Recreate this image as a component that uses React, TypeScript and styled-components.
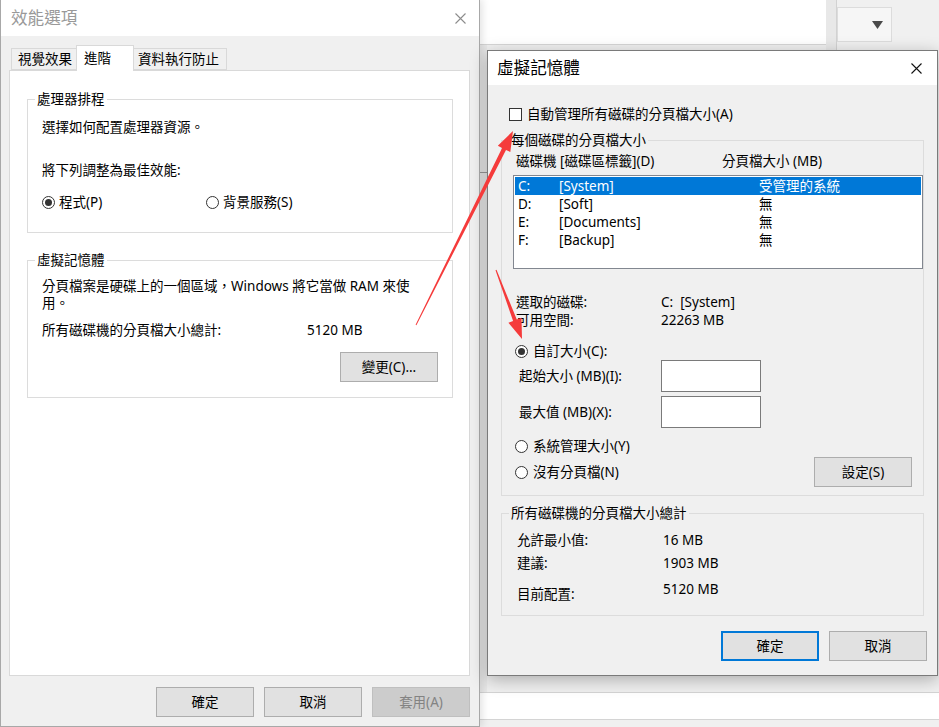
import React from "react";
import styled, { createGlobalStyle } from "styled-components";

const FONT = `"Noto Sans", "Noto Sans CJK TC", sans-serif`;

const GlobalStyle = createGlobalStyle`
  html, body { margin: 0; padding: 0; background: #f0f0f0; }
  body { font-family: ${FONT}; }
  *, *::before, *::after { box-sizing: border-box; }
`;

const Desktop = styled.div`
  position: relative;
  width: 939px;
  height: 727px;
  overflow: hidden;
  background: #f0f0f0;
  font-family: ${FONT};
  font-size: 13.5px;
  line-height: 18px;
  color: #000;
`;

/* ---------- background windows ---------- */
const BackPane = styled.div`
  position: absolute;
  left: 479px;
  top: 0;
  width: 347px;
  height: 45px;
  background: #fff;
  border-bottom: 1px solid #d6d6d6;
`;
const BackSplitter = styled.div`
  position: absolute;
  left: 826px;
  top: 0;
  width: 11px;
  height: 60px;
  background: #e8e8e8;
  border-right: 1px solid #d2d2d2;
`;
const BackSelect = styled.div`
  position: absolute;
  left: 837px;
  top: 7px;
  width: 55px;
  height: 35px;
  border: 1px solid #dcdcdc;
  background: #f6f6f6;
  display: flex;
  align-items: center;
  justify-content: flex-end;
  padding-right: 8px;
`;
const BackGutter = styled.div`
  position: absolute;
  left: 479px;
  top: 45px;
  width: 8px;
  height: 647px;
  background: #eaeaea;
  border-top: 127px solid #eaeaea;
  &::after {
    content: "";
    position: absolute;
    left: 0;
    top: 0;
    width: 8px;
    height: 1px;
    background: #9a9a9a;
  }
`;
const BackStrip = styled.div`
  position: absolute;
  left: 479px;
  top: 692px;
  width: 460px;
  height: 28px;
  background: #fff;
  border-top: 1px solid #d4d4d4;
  border-bottom: 1px solid #d4d4d4;
`;

/* ---------- window chrome ---------- */
const Window = styled.div<{ $active?: boolean }>`
  position: absolute;
  display: flex;
  flex-direction: column;
  background: #f0f0f0;
  border: 1px solid ${(p) => (p.$active ? "#7a7a7a" : "#a8a8a8")};
  box-shadow: ${(p) =>
    p.$active ? "0 4px 16px rgba(0,0,0,0.28)" : "2px 0 8px rgba(0,0,0,0.12)"};
`;
const PerfWindow = styled(Window)`
  left: 0;
  top: -1px;
  width: 480px;
  height: 728px;
`;
const VmWindow = styled(Window)`
  left: 487px;
  top: 50px;
  width: 451px;
  z-index: 2;
`;
const TitleBar = styled.div<{ $h: number; $pr: number; $pl: number }>`
  height: ${(p) => p.$h}px;
  flex: none;
  background: #fff;
  display: flex;
  align-items: center;
  justify-content: space-between;
  padding: 0 ${(p) => p.$pr}px 0 ${(p) => p.$pl}px;
`;
const TitleText = styled.span<{ $inactive?: boolean }>`
  font-size: 16.6px;
  line-height: 22px;
  color: ${(p) => (p.$inactive ? "#999" : "#000")};
`;

const CloseIcon = ({ color }: { color: string }) => (
  <svg width="11" height="11" viewBox="0 0 11 11">
    <path d="M0.5 0.5 L10.5 10.5 M10.5 0.5 L0.5 10.5" stroke={color} strokeWidth="1.1" fill="none" />
  </svg>
);

const CaretDown = () => (
  <svg width="11" height="8" viewBox="0 0 11 8">
    <polygon points="0,0 11,0 5.5,8" fill="#4a4a4a" />
  </svg>
);

/* ---------- shared controls ---------- */
const Btn = styled.button<{ $default?: boolean }>`
  width: 98px;
  height: 30px;
  flex: none;
  padding: 0;
  font: inherit;
  color: #000;
  background: #e1e1e1;
  border: ${(p) => (p.$default ? "2px solid #0078d7" : "1px solid #adadad")};
  &:disabled {
    background: #cccccc;
    border-color: #bfbfbf;
    color: #838383;
  }
`;
const ButtonRow = styled.div<{ $mt: number; $mr?: number }>`
  display: flex;
  justify-content: flex-end;
  gap: 10px;
  margin-top: ${(p) => p.$mt}px;
  margin-right: ${(p) => p.$mr ?? 0}px;
`;

const Group = styled.fieldset<{ $mt?: number }>`
  margin: ${(p) => p.$mt ?? 0}px 0 0 0;
  padding: 0;
  min-width: 0;
  border: 1px solid #dcdcdc;
`;
const Legend = styled.legend`
  margin-left: 7px;
  padding: 0 2px;
  line-height: 18px;
`;
const GroupBody = styled.div<{ $pad: string }>`
  display: flex;
  flex-direction: column;
  padding: ${(p) => p.$pad};
`;

const Radio = styled.span<{ $checked?: boolean }>`
  position: relative;
  flex: none;
  width: 13px;
  height: 13px;
  border-radius: 50%;
  border: 1px solid #333;
  background: #fff;
  &::after {
    content: "";
    position: absolute;
    inset: 2px;
    border-radius: 50%;
    background: ${(p) => (p.$checked ? "#333" : "transparent")};
  }
`;
const CheckBox = styled.span`
  flex: none;
  width: 13px;
  height: 13px;
  border: 1px solid #333;
  background: #fff;
`;
const Choice = styled.label<{ $gap: number; $pl?: number; $mt?: number }>`
  display: flex;
  align-items: center;
  gap: ${(p) => p.$gap}px;
  height: 18px;
  padding-left: ${(p) => p.$pl ?? 0}px;
  margin-top: ${(p) => p.$mt ?? 0}px;
  white-space: nowrap;
`;

const Line = styled.div<{ $mt?: number }>`
  margin-top: ${(p) => p.$mt ?? 0}px;
  white-space: pre;
`;

/* ---------- perf options dialog ---------- */
const PerfBody = styled.div`
  flex: 1;
  display: flex;
  flex-direction: column;
  padding: 9px 9px 9px 8px;
`;
const TabStrip = styled.div`
  position: relative;
  z-index: 1;
  display: flex;
  align-items: flex-start;
  height: 25px;
  margin-left: 2px;
`;
const Tab = styled.div<{ $w: number; $pl: number; $active?: boolean }>`
  width: ${(p) => p.$w}px;
  height: ${(p) => (p.$active ? 26 : 22)}px;
  margin-top: ${(p) => (p.$active ? 0 : 3)}px;
  margin-left: -1px;
  padding-left: ${(p) => p.$pl}px;
  padding-bottom: ${(p) => (p.$active ? 2 : 0)}px;
  display: flex;
  align-items: center;
  white-space: nowrap;
  background: ${(p) => (p.$active ? "#fff" : "#f0f0f0")};
  border: 1px solid #d9d9d9;
  border-bottom: ${(p) => (p.$active ? "none" : "1px solid #d9d9d9")};
  &:first-child {
    margin-left: 0;
  }
`;
const TabPanel = styled.div`
  flex: 1;
  display: flex;
  flex-direction: column;
  background: #fff;
  border: 1px solid #d9d9d9;
  padding: 19px 16px 0 17px;
`;
const TwoCol = styled.div<{ $col: number; $mt?: number; $pl?: number }>`
  display: grid;
  grid-template-columns: ${(p) => p.$col}px auto;
  align-items: center;
  margin-top: ${(p) => p.$mt ?? 0}px;
  padding-left: ${(p) => p.$pl ?? 0}px;
  white-space: pre;
`;
const Para = styled.p`
  margin: 0;
  line-height: 17px;
`;

/* ---------- virtual memory dialog ---------- */
const VmBody = styled.div`
  display: flex;
  flex-direction: column;
  padding: 20px 13px 14px 13px;
`;
const ListHeader = styled.div`
  display: grid;
  grid-template-columns: 206px auto;
  padding-left: 3px;
  white-space: nowrap;
`;
const ListBox = styled.div`
  height: 94px;
  margin-top: 5px;
  padding: 1px;
  background: #fff;
  border: 1px solid #828790;
`;
const ListRow = styled.div<{ $selected?: boolean }>`
  display: grid;
  grid-template-columns: 41px 200px 1fr;
  height: 18px;
  padding-left: 3px;
  white-space: nowrap;
  background: ${(p) => (p.$selected ? "#0078d7" : "transparent")};
  color: ${(p) => (p.$selected ? "#fff" : "#000")};
`;
const FieldRow = styled.div<{ $mt?: number }>`
  display: grid;
  grid-template-columns: 142px 100px;
  align-items: center;
  padding-left: 6px;
  margin-top: ${(p) => p.$mt ?? 0}px;
  white-space: nowrap;
`;
const TextBox = styled.input`
  width: 100px;
  height: 32px;
  border: 1px solid #7a7a7a;
  background: #fff;
  font: inherit;
  padding: 0 3px;
`;
const SplitRow = styled.div<{ $mt?: number }>`
  display: flex;
  align-items: center;
  justify-content: space-between;
  margin-top: ${(p) => p.$mt ?? 0}px;
  padding-right: 11px;
`;
const TotalRow = styled.div<{ $mt?: number; $labelDrop?: number }>`
  display: grid;
  grid-template-columns: 146px auto;
  align-items: start;
  margin-top: ${(p) => p.$mt ?? 0}px;
  white-space: nowrap;
  & > span:first-child {
    padding-top: ${(p) => p.$labelDrop ?? 0}px;
  }
`;

const ArrowLayer = styled.svg`
  position: absolute;
  left: 0;
  top: 0;
  z-index: 10;
  pointer-events: none;
`;

const drives = [
  { d: "C:", label: "[System]", size: "受管理的系統", selected: true },
  { d: "D:", label: "[Soft]", size: "無" },
  { d: "E:", label: "[Documents]", size: "無" },
  { d: "F:", label: "[Backup]", size: "無" },
];

export default function App() {
  return (
    <>
      <GlobalStyle />
      <Desktop>
        <BackPane />
        <BackSplitter />
        <BackSelect>
          <CaretDown />
        </BackSelect>
        <BackGutter />
        <BackStrip />

        <PerfWindow>
          <TitleBar $h={36} $pl={10} $pr={13}>
            <TitleText $inactive>效能選項</TitleText>
            <CloseIcon color="#8c8c8c" />
          </TitleBar>
          <PerfBody>
            <TabStrip>
              <Tab $w={66} $pl={6}>視覺效果</Tab>
              <Tab $w={58} $pl={7} $active>進階</Tab>
              <Tab $w={94} $pl={4}>資料執行防止</Tab>
            </TabStrip>
            <TabPanel>
              <Group>
                <Legend>處理器排程</Legend>
                <GroupBody $pad="10px 14px 21px 14px">
                  <Line>選擇如何配置處理器資源。</Line>
                  <Line $mt={25}>將下列調整為最佳效能:</Line>
                  <TwoCol $col={164} $mt={14}>
                    <Choice $gap={4}>
                      <Radio $checked />
                      程式(P)
                    </Choice>
                    <Choice $gap={4}>
                      <Radio />
                      背景服務(S)
                    </Choice>
                  </TwoCol>
                </GroupBody>
              </Group>
              <Group $mt={18}>
                <Legend>虛擬記憶體</Legend>
                <GroupBody $pad="9px 14px 15px 14px">
                  <Para>
                    分頁檔案是硬碟上的一個區域，Windows 將它當做 RAM 來使
                    <br />
                    用。
                  </Para>
                  <TwoCol $col={265} $mt={9}>
                    <span>所有磁碟機的分頁檔大小總計:</span>
                    <span>5120 MB</span>
                  </TwoCol>
                  <ButtonRow $mt={13}>
                    <Btn>變更(C)...</Btn>
                  </ButtonRow>
                </GroupBody>
              </Group>
            </TabPanel>
            <ButtonRow $mt={11}>
              <Btn>確定</Btn>
              <Btn>取消</Btn>
              <Btn disabled>套用(A)</Btn>
            </ButtonRow>
          </PerfBody>
        </PerfWindow>

        <VmWindow $active>
          <TitleBar $h={34} $pl={9} $pr={15}>
            <TitleText>虛擬記憶體</TitleText>
            <CloseIcon color="#111" />
          </TitleBar>
          <VmBody>
            <Choice $gap={5} $pl={8}>
              <CheckBox />
              自動管理所有磁碟的分頁檔大小(A)
            </Choice>
            <Group $mt={8}>
              <Legend>每個磁碟的分頁檔大小</Legend>
              <GroupBody $pad="3px 0 8px 11px">
                <ListHeader>
                  <span>磁碟機 [磁碟區標籤](D)</span>
                  <span>分頁檔大小 (MB)</span>
                </ListHeader>
                <ListBox>
                  {drives.map((r) => (
                    <ListRow key={r.d} $selected={r.selected}>
                      <span>{r.d}</span>
                      <span>{r.label}</span>
                      <span>{r.size}</span>
                    </ListRow>
                  ))}
                </ListBox>
                <TwoCol $col={145} $pl={3} $mt={24}>
                  <span>選取的磁碟:</span>
                  <span>C:  [System]</span>
                </TwoCol>
                <TwoCol $col={145} $pl={3}>
                  <span>可用空間:</span>
                  <span>22263 MB</span>
                </TwoCol>
                <Choice $gap={5} $pl={2} $mt={13}>
                  <Radio $checked />
                  自訂大小(C):
                </Choice>
                <FieldRow>
                  <span>起始大小 (MB)(I):</span>
                  <TextBox />
                </FieldRow>
                <FieldRow $mt={4}>
                  <span>最大值 (MB)(X):</span>
                  <TextBox />
                </FieldRow>
                <Choice $gap={5} $pl={2} $mt={9}>
                  <Radio />
                  系統管理大小(Y)
                </Choice>
                <SplitRow $mt={2}>
                  <Choice $gap={5} $pl={2}>
                    <Radio />
                    沒有分頁檔(N)
                  </Choice>
                  <Btn>設定(S)</Btn>
                </SplitRow>
              </GroupBody>
            </Group>
            <Group $mt={8}>
              <Legend>所有磁碟機的分頁檔大小總計</Legend>
              <GroupBody $pad="9px 0 12px 15px">
                <TotalRow>
                  <span>允許最小值:</span>
                  <span>16 MB</span>
                </TotalRow>
                <TotalRow $mt={5}>
                  <span>建議:</span>
                  <span>1903 MB</span>
                </TotalRow>
                <TotalRow $mt={8} $labelDrop={5}>
                  <span>目前配置:</span>
                  <span>5120 MB</span>
                </TotalRow>
              </GroupBody>
            </Group>
            <ButtonRow $mt={15} $mr={-3}>
              <Btn $default>確定</Btn>
              <Btn>取消</Btn>
            </ButtonRow>
          </VmBody>
        </VmWindow>

        <ArrowLayer width="939" height="727" viewBox="0 0 939 727">
          <polygon
            points="416.4,325.2 506.0,149.9 510.3,152.0 513,131 497.8,145.7 502.1,147.9 415.6,324.8"
            fill="#f53b3b"
          />
          <polygon
            points="495.5,270.2 513.1,321.0 508.4,322.8 522,339 521.5,317.8 516.8,319.6 496.5,269.8"
            fill="#f53b3b"
          />
        </ArrowLayer>
      </Desktop>
    </>
  );
}
